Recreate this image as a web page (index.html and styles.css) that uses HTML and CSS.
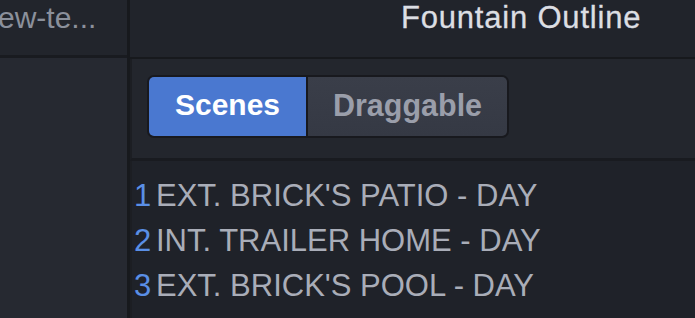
FILE: index.html
```html
<!DOCTYPE html>
<html>
<head>
<meta charset="utf-8">
<link rel="stylesheet" href="styles.css">
</head>
<body>
<div class="app">
  <aside class="sidebar">
    <div class="side-head"><span class="file-name">ew-te...</span></div>
    <div class="side-body"></div>
  </aside>
  <main class="main">
    <header class="main-head"><span class="title">Fountain Outline</span></header>
    <div class="toolbar">
      <div class="seg">
        <button class="seg-btn active">Scenes</button>
        <button class="seg-btn wide">Draggable</button>
      </div>
    </div>
    <ol class="scenes">
      <li class="scene"><span class="num">1</span>EXT. BRICK'S PATIO - DAY</li>
      <li class="scene"><span class="num">2</span>INT. TRAILER HOME - DAY</li>
      <li class="scene"><span class="num">3</span>EXT. BRICK'S POOL - DAY</li>
      <li class="scene"><span class="num">4</span>SUPER SCOOP - DAY</li>
    </ol>
  </main>
</div>
</body>
</html>
```
FILE: styles.css
```css
html, body {
  margin: 0;
  padding: 0;
  background: #21242b;
  font-family: "Liberation Sans", Arial, sans-serif;
}
.app {
  display: flex;
  width: 695px;
  height: 318px;
  overflow: hidden;
}
.sidebar {
  width: 127px;
  flex: none;
  display: flex;
  flex-direction: column;
  border-right: 3px solid #17191d;
}
.side-head {
  height: 55px;
  flex: none;
  border-bottom: 3px solid #191b20;
  background: #22252c;
  overflow: hidden;
  white-space: nowrap;
}
.file-name {
  display: block;
  margin-left: -2px;
  padding-top: 3px;
  font-size: 30px;
  line-height: 30px;
  color: #8b909b;
}
.side-body {
  flex: 1;
  background: #262931;
}
.main {
  flex: 1;
  display: flex;
  flex-direction: column;
  min-width: 0;
}
.main-head {
  height: 57px;
  flex: none;
  border-bottom: 2px solid #17191d;
  background: #21242b;
  white-space: nowrap;
}
.title {
  display: block;
  padding-left: 271px;
  padding-top: 3px;
  font-size: 31px;
  line-height: 30px;
  letter-spacing: 0.8px;
  color: #dcdee3;
  -webkit-text-stroke: 0.3px #dcdee3;
}
.toolbar {
  height: 102px;
  flex: none;
  box-sizing: border-box;
  padding: 16px 0 0 17px;
  border-bottom: 3px solid #191b20;
  border-left: 2px solid #1c1e23;
  background: #23262d;
}
.seg {
  display: inline-flex;
  border: 2px solid #18191e;
  border-radius: 7px;
  overflow: hidden;
  background: #18191e;
  gap: 2px;
  margin-left: -2px;
}
.seg-btn {
  width: 157px;
  height: 59px;
  border: 0;
  padding: 0 0 3px;
  margin: 0;
  font-family: "Liberation Sans", Arial, sans-serif;
  font-size: 30px;
  font-weight: 700;
  color: #9a9eaa;
  background: linear-gradient(#3a3e49, #353944);
}
.seg-btn.wide {
  width: 199px;
  font-size: 30.5px;
}
.seg-btn.active {
  background: #4a78d0;
  color: #ffffff;
}
.scenes {
  list-style: none;
  margin: 0;
  padding: 12px 0 0 2px;
  flex: 1;
  background: #1f2229;
  border-left: 2px solid #1c1e23;
}
.scene {
  font-size: 31px;
  line-height: 45px;
  color: #a9adb8;
  white-space: nowrap;
}
.num {
  display: inline-block;
  width: 22px;
  color: #5a8fe6;
}
```
